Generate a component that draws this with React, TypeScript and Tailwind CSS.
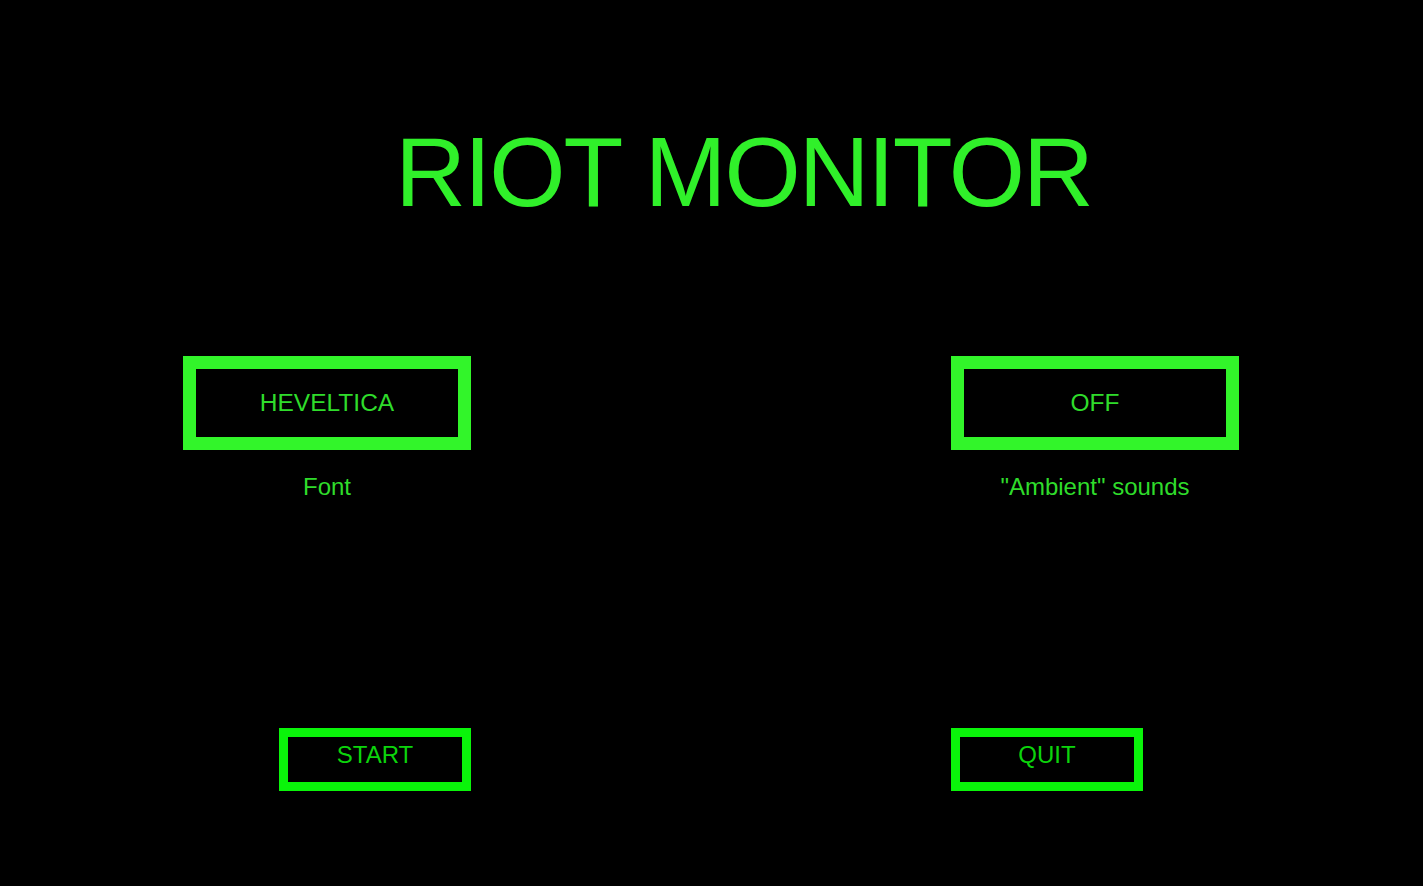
const font = { fontFamily: '"Liberation Sans", Arial, sans-serif' };

function BigBox({ value, label }: { value: string; label: string }) {
  return (
    <div className="flex w-[288px] flex-col items-center">
      <div className="flex h-[94px] w-full items-center justify-center border-[13px] border-[#32f52a] bg-black">
        <span className="text-[24.5px] leading-[28px] text-[#2fdc2b]">{value}</span>
      </div>
      <p className="mt-[23px] text-[24px] leading-[28px] text-[#2fdc2b]">{label}</p>
    </div>
  );
}

function SmallButton({ text }: { text: string }) {
  return (
    <button className="flex h-[63px] w-[192px] justify-center border-[9px] border-[#0af40a] bg-black pt-[4px]">
      <span className="text-[24px] leading-[28px] text-[#0cd40c]">{text}</span>
    </button>
  );
}

export default function App() {
  return (
    <div className="h-[886px] w-full overflow-hidden bg-black" style={font}>
      {/* title */}
      <div className="flex justify-center pl-[64px] pt-[123px]">
        <h1 className="text-[98px] leading-[98px] font-normal tracking-[-2px] text-[#30f02a]">
          RIOT MONITOR
        </h1>
      </div>

      {/* settings */}
      <div className="mt-[135px] flex pl-[183px]">
        <BigBox value="HEVELTICA" label="Font" />
        <div className="w-[480px]" />
        <BigBox value="OFF" label={'"Ambient" sounds'} />
      </div>

      {/* actions */}
      <div className="mt-[227px] flex pl-[279px]">
        <SmallButton text="START" />
        <div className="w-[480px]" />
        <SmallButton text="QUIT" />
      </div>
    </div>
  );
}
